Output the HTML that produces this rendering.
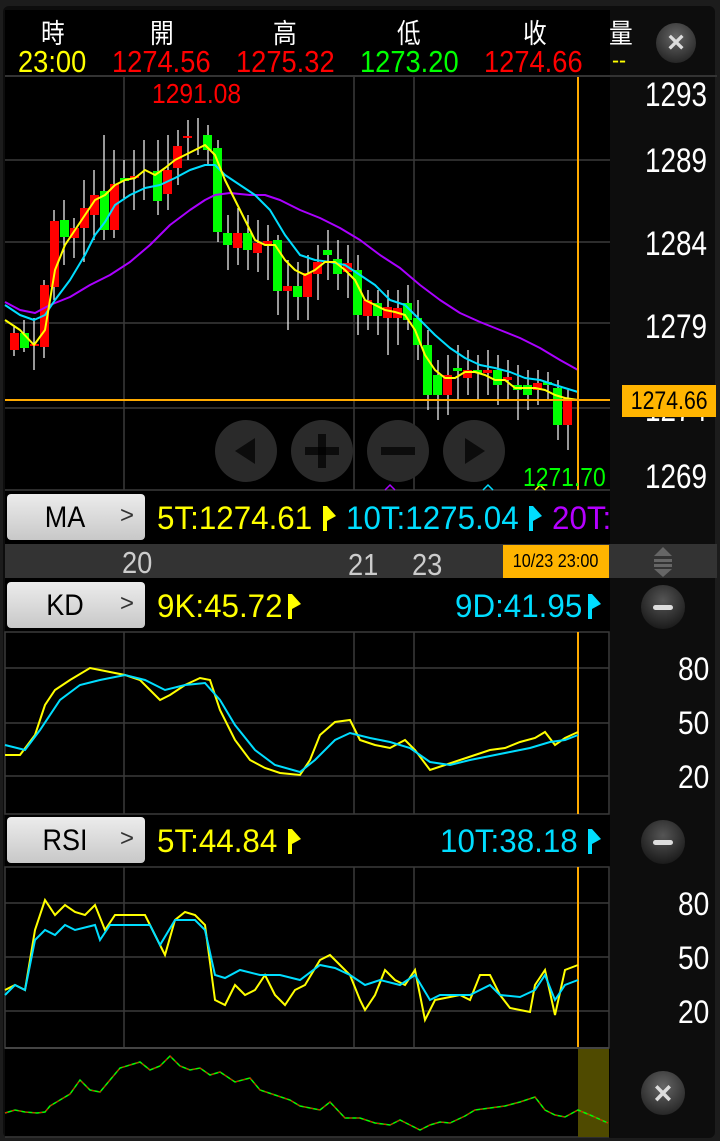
<!DOCTYPE html>
<html><head><meta charset="utf-8"><style>
*{margin:0;padding:0;box-sizing:border-box}
body{width:720px;height:1141px;background:#1c1c1c;overflow:hidden;font-family:"Liberation Sans","Noto Sans CJK TC",sans-serif;position:relative}
.abs{position:absolute}
.btn{position:absolute;left:7px;width:138px;height:46px;background:linear-gradient(#ececec,#c8c8c8);border-radius:4px;color:#000;font-size:30px;line-height:48px}
.btn span{position:absolute;left:0;width:116px;text-align:center;transform:scaleX(.9)}
.btn i{position:absolute;right:11px;font-style:normal;font-size:24px;color:#333;top:-2px}
.t{position:absolute;font-size:28px;white-space:nowrap;transform:scaleX(.88);transform-origin:left top}
.r{position:absolute;font-size:32px;white-space:nowrap;transform:scaleX(.98);transform-origin:left top}
.y{position:absolute;left:645px;font-size:34px;color:#fff;white-space:nowrap;transform:scaleX(.82);transform-origin:left top}
.circ{position:absolute;width:44px;height:44px;border-radius:50%;background:radial-gradient(circle at 50% 35%,#555,#1a1a1a 80%);}
.circ b{position:absolute;left:12px;top:20px;width:20px;height:5px;background:#ddd;border-radius:3px}
.zb{position:absolute;top:420px;width:62px;height:62px;border-radius:50%;background:#2a2a2a}
</style></head><body>
<div class="abs" style="left:3px;top:6px;width:712px;height:1132px;background:#0d0d0d;border-radius:6px"></div>
<div class="abs" style="left:5px;top:10px;width:605px;height:1127px;background:#000"></div>
<div class="t" style="left:41px;top:12px;color:#fff;font-size:27px">時</div>
<div class="t" style="left:150px;top:12px;color:#fff;font-size:27px">開</div>
<div class="t" style="left:273px;top:12px;color:#fff;font-size:27px">高</div>
<div class="t" style="left:397px;top:12px;color:#fff;font-size:27px">低</div>
<div class="t" style="left:523px;top:12px;color:#fff;font-size:27px">收</div>
<div class="t" style="left:609px;top:12px;color:#fff;font-size:27px">量</div>
<div class="t" style="left:18px;top:44px;color:#ffff00;font-size:31px">23:00</div>
<div class="t" style="left:112px;top:44px;color:#f00;font-size:31px">1274.56</div>
<div class="t" style="left:236px;top:44px;color:#f00;font-size:31px">1275.32</div>
<div class="t" style="left:360px;top:44px;color:#0f0;font-size:31px">1273.20</div>
<div class="t" style="left:484px;top:44px;color:#f00;font-size:31px">1274.66</div>
<div class="t" style="left:612px;top:47px;color:#ff0;font-size:24px">--</div>
<div class="abs" style="left:656px;top:23px;width:40px;height:40px;border-radius:50%;background:radial-gradient(circle at 50% 35%,#666,#222 85%);color:#ddd;font-size:30px;font-weight:bold;text-align:center;line-height:40px">×</div>
<div class="abs" style="left:5px;top:75px;width:712px;height:2px;background:#333"></div>

<svg class="abs" style="left:0;top:0" width="720" height="1141">
<g stroke="#3a3a3a" stroke-width="1.5" fill="none">
<line x1="124" y1="77" x2="124" y2="490"/><line x1="354" y1="77" x2="354" y2="490"/><line x1="414" y1="77" x2="414" y2="490"/>
<line x1="5" y1="160" x2="610" y2="160"/><line x1="5" y1="242" x2="610" y2="242"/><line x1="5" y1="323" x2="610" y2="323"/><line x1="5" y1="408" x2="610" y2="408"/>
<line x1="5" y1="490" x2="610" y2="490"/>
<rect x="5" y="632" width="604" height="182"/>
<line x1="124" y1="632" x2="124" y2="814"/><line x1="354" y1="632" x2="354" y2="814"/><line x1="414" y1="632" x2="414" y2="814"/>
<line x1="5" y1="668" x2="609" y2="668"/><line x1="5" y1="723" x2="609" y2="723"/><line x1="5" y1="776" x2="609" y2="776"/>
<rect x="5" y="867" width="604" height="181"/>
<line x1="124" y1="867" x2="124" y2="1048"/><line x1="354" y1="867" x2="354" y2="1048"/><line x1="414" y1="867" x2="414" y2="1048"/>
<line x1="5" y1="903" x2="609" y2="903"/><line x1="5" y1="957" x2="609" y2="957"/><line x1="5" y1="1011" x2="609" y2="1011"/>
<line x1="5" y1="1137" x2="609" y2="1137"/>
</g>
<g stroke="#fff" stroke-width="1.2">
<line x1="14" y1="325" x2="14" y2="356"/><line x1="24" y1="320" x2="24" y2="352"/><line x1="34" y1="318" x2="34" y2="370"/><line x1="44" y1="280" x2="44" y2="358"/><line x1="54" y1="210" x2="54" y2="300"/><line x1="64" y1="200" x2="64" y2="265"/><line x1="74" y1="218" x2="74" y2="258"/><line x1="84" y1="180" x2="84" y2="262"/><line x1="94" y1="170" x2="94" y2="240"/><line x1="104" y1="135" x2="104" y2="240"/><line x1="114" y1="150" x2="114" y2="238"/><line x1="124" y1="160" x2="124" y2="200"/><line x1="134" y1="150" x2="134" y2="210"/><line x1="144" y1="140" x2="144" y2="200"/><line x1="158" y1="140" x2="158" y2="215"/><line x1="168" y1="135" x2="168" y2="210"/><line x1="178" y1="130" x2="178" y2="185"/><line x1="188" y1="120" x2="188" y2="160"/><line x1="198" y1="118" x2="198" y2="155"/><line x1="208" y1="125" x2="208" y2="165"/><line x1="218" y1="140" x2="218" y2="242"/><line x1="228" y1="215" x2="228" y2="270"/><line x1="238" y1="208" x2="238" y2="265"/><line x1="248" y1="215" x2="248" y2="270"/><line x1="258" y1="220" x2="258" y2="272"/><line x1="268" y1="225" x2="268" y2="280"/><line x1="278" y1="235" x2="278" y2="315"/><line x1="288" y1="260" x2="288" y2="330"/><line x1="298" y1="262" x2="298" y2="320"/><line x1="308" y1="255" x2="308" y2="320"/><line x1="318" y1="245" x2="318" y2="300"/><line x1="328" y1="230" x2="328" y2="280"/><line x1="338" y1="240" x2="338" y2="290"/><line x1="348" y1="245" x2="348" y2="298"/><line x1="358" y1="255" x2="358" y2="335"/><line x1="368" y1="290" x2="368" y2="330"/><line x1="378" y1="290" x2="378" y2="335"/><line x1="388" y1="290" x2="388" y2="355"/><line x1="398" y1="290" x2="398" y2="345"/><line x1="408" y1="285" x2="408" y2="330"/><line x1="418" y1="300" x2="418" y2="360"/><line x1="428" y1="330" x2="428" y2="410"/><line x1="438" y1="360" x2="438" y2="420"/><line x1="448" y1="355" x2="448" y2="415"/><line x1="458" y1="345" x2="458" y2="400"/><line x1="468" y1="350" x2="468" y2="395"/><line x1="478" y1="355" x2="478" y2="400"/><line x1="488" y1="350" x2="488" y2="395"/><line x1="498" y1="355" x2="498" y2="405"/><line x1="508" y1="360" x2="508" y2="400"/><line x1="518" y1="365" x2="518" y2="420"/><line x1="528" y1="370" x2="528" y2="410"/><line x1="538" y1="370" x2="538" y2="405"/><line x1="548" y1="372" x2="548" y2="400"/><line x1="558" y1="380" x2="558" y2="440"/><line x1="568" y1="390" x2="568" y2="450"/>
</g>
<g>
<rect x="10" y="333" width="9" height="17" fill="#f00"/><rect x="20" y="333" width="9" height="15" fill="#0f0"/><rect x="30" y="344" width="9" height="2" fill="#f00"/><rect x="40" y="285" width="9" height="62" fill="#f00"/><rect x="50" y="221" width="9" height="66" fill="#f00"/><rect x="60" y="220" width="9" height="17" fill="#0f0"/><rect x="70" y="228" width="9" height="10" fill="#f00"/><rect x="80" y="208" width="9" height="20" fill="#f00"/><rect x="90" y="195" width="9" height="20" fill="#f00"/><rect x="100" y="191" width="9" height="39" fill="#0f0"/><rect x="110" y="184" width="9" height="46" fill="#f00"/><rect x="120" y="178" width="9" height="3" fill="#0f0"/><rect x="130" y="176" width="9" height="2" fill="#f00"/>
<rect x="153" y="171" width="9" height="30" fill="#0f0"/><rect x="163" y="170" width="9" height="24" fill="#f00"/><rect x="173" y="146" width="9" height="22" fill="#f00"/><rect x="183" y="136" width="9" height="2" fill="#f00"/><rect x="203" y="135" width="9" height="15" fill="#0f0"/><rect x="213" y="148" width="9" height="84" fill="#0f0"/><rect x="223" y="233" width="9" height="12" fill="#0f0"/><rect x="233" y="233" width="9" height="15" fill="#f00"/><rect x="243" y="233" width="9" height="17" fill="#0f0"/><rect x="253" y="243" width="9" height="10" fill="#f00"/><rect x="263" y="241" width="9" height="3" fill="#f00"/><rect x="273" y="240" width="9" height="51" fill="#0f0"/><rect x="283" y="286" width="9" height="5" fill="#f00"/><rect x="293" y="286" width="9" height="11" fill="#0f0"/><rect x="303" y="273" width="9" height="24" fill="#f00"/><rect x="313" y="262" width="9" height="12" fill="#f00"/><rect x="323" y="250" width="9" height="5" fill="#0f0"/><rect x="333" y="259" width="9" height="15" fill="#0f0"/><rect x="343" y="263" width="9" height="9" fill="#f00"/><rect x="353" y="270" width="9" height="45" fill="#0f0"/><rect x="363" y="300" width="9" height="16" fill="#f00"/><rect x="373" y="303" width="9" height="13" fill="#0f0"/><rect x="383" y="307" width="9" height="11" fill="#f00"/><rect x="393" y="308" width="9" height="10" fill="#f00"/><rect x="403" y="303" width="9" height="17" fill="#0f0"/><rect x="413" y="318" width="9" height="27" fill="#0f0"/><rect x="423" y="345" width="9" height="50" fill="#0f0"/><rect x="433" y="375" width="9" height="20" fill="#0f0"/><rect x="443" y="375" width="9" height="20" fill="#f00"/><rect x="453" y="368" width="9" height="3" fill="#0f0"/><rect x="463" y="370" width="9" height="8" fill="#f00"/><rect x="473" y="370" width="9" height="3" fill="#0f0"/><rect x="483" y="370" width="9" height="3" fill="#f00"/><rect x="493" y="370" width="9" height="15" fill="#0f0"/><rect x="503" y="377" width="9" height="3" fill="#f00"/><rect x="513" y="385" width="9" height="5" fill="#0f0"/><rect x="523" y="385" width="9" height="10" fill="#0f0"/><rect x="533" y="383" width="9" height="7" fill="#f00"/><rect x="543" y="382" width="9" height="3" fill="#0f0"/><rect x="553" y="388" width="9" height="37" fill="#0f0"/><rect x="563" y="398" width="9" height="27" fill="#f00"/>
</g>
<g fill="none" stroke-width="2" stroke-linejoin="round">
<polyline stroke="#aa00ff" points="5,302 20,310 35,313 50,305 70,297 90,285 110,275 130,262 150,245 170,225 190,210 205,200 215,195 230,193 250,195 265,195 280,200 300,210 320,218 340,228 360,240 380,255 400,268 420,285 440,300 460,313 480,322 500,330 520,338 540,348 560,360 578,370"/>
<polyline stroke="#00ddff" points="5,305 20,315 34,320 45,315 55,300 70,280 85,255 95,235 105,222 115,205 130,195 145,188 160,185 175,178 190,170 205,165 215,165 225,175 240,185 255,195 270,210 285,235 300,255 315,260 330,262 345,265 360,275 375,285 390,300 405,305 420,320 435,335 450,348 465,358 480,365 495,368 510,372 525,378 540,380 555,385 578,392"/>
<polyline stroke="#ffff00" points="5,320 20,330 34,345 45,330 55,270 65,245 75,230 85,215 95,200 105,195 115,185 125,180 135,178 145,170 155,175 165,168 175,160 185,155 195,150 205,145 215,155 225,180 235,200 245,220 255,240 265,245 275,245 285,260 295,270 305,275 315,270 325,262 335,262 345,270 355,280 365,300 375,305 385,310 395,312 405,315 415,330 425,355 435,370 445,378 455,378 465,372 475,372 485,375 495,380 505,380 515,388 525,388 535,388 545,390 555,395 565,398 578,400"/>
</g>
<path d="M385 490 l5 -5 l5 5" stroke="#aa00ff" fill="none" stroke-width="1.5"/>
<path d="M483 490 l5 -5 l5 5" stroke="#00ddff" fill="none" stroke-width="1.5"/>
<path d="M535 490 l5 -5 l5 5" stroke="#ffff00" fill="none" stroke-width="1.5"/>
<line x1="5" y1="400" x2="610" y2="400" stroke="#ffaa00" stroke-width="2"/>
<line x1="578" y1="77" x2="578" y2="490" stroke="#ffaa00" stroke-width="2"/>
<line x1="578" y1="632" x2="578" y2="814" stroke="#ffaa00" stroke-width="2"/>
<line x1="578" y1="867" x2="578" y2="1048" stroke="#ffaa00" stroke-width="2"/>
<g fill="none" stroke-width="2">
<polyline stroke="#ffff00" points="5,755 20,755 35,735 45,705 55,690 70,680 90,668 110,672 125,675 140,680 150,690 160,700 170,695 185,685 200,678 210,680 220,710 235,740 250,760 265,768 280,773 300,775 310,760 320,735 335,722 350,720 360,740 375,745 390,748 405,740 415,750 430,770 445,765 460,760 475,755 490,750 505,748 520,742 535,738 545,732 555,745 565,738 578,732"/>
<polyline stroke="#00ddff" points="5,745 25,750 40,730 60,700 80,685 100,680 125,675 145,680 165,690 185,685 205,683 220,700 235,725 255,750 275,765 300,772 315,760 335,740 350,733 370,738 390,742 410,748 430,762 450,765 470,760 490,756 510,752 530,748 550,742 565,740 578,735"/>
<polyline stroke="#ffff00" points="5,990 15,985 25,990 35,930 45,900 55,915 65,905 75,912 85,915 95,905 105,930 115,915 125,915 135,915 145,915 155,935 165,955 175,920 185,912 195,915 205,925 215,1000 225,1005 235,985 245,995 255,990 265,975 275,995 285,1005 295,990 305,985 320,960 330,955 340,965 350,975 360,1000 365,1010 375,995 385,970 395,980 405,985 415,970 425,1020 435,1000 445,998 460,995 470,1000 480,975 490,975 500,995 510,1008 520,1010 530,1012 535,985 545,970 555,1015 565,970 578,965"/>
<polyline stroke="#00ddff" points="5,995 15,985 25,990 35,940 45,930 55,935 65,925 75,930 95,925 100,940 110,925 150,925 160,945 175,920 195,920 205,930 215,975 225,978 240,970 260,975 280,975 300,980 320,965 335,968 350,975 365,985 380,980 400,985 415,975 430,1000 440,995 455,995 470,995 490,985 500,995 520,997 535,990 545,975 555,1000 565,985 578,980"/>
</g>
<rect x="578" y="1049" width="31" height="88" fill="#4f4a00"/>
<line x1="5" y1="1048" x2="609" y2="1048" stroke="#444" stroke-width="2"/>
<polyline fill="none" stroke="#0f0" stroke-width="1.5" points="5,1113 15,1110 25,1112 37,1113 45,1112 50,1106 60,1100 70,1094 80,1080 90,1090 100,1092 110,1080 120,1068 130,1065 140,1062 150,1070 160,1066 170,1056 180,1066 190,1070 200,1068 210,1075 220,1072 235,1082 250,1078 260,1090 275,1095 290,1100 300,1106 320,1110 330,1102 345,1118 360,1118 375,1123 390,1125 400,1120 410,1125 420,1130 430,1125 440,1122 450,1123 465,1116 475,1110 490,1108 505,1106 520,1102 535,1097 545,1110 555,1115 565,1117 578,1110 590,1115 608,1123"/>
<polyline fill="none" stroke="#f00" stroke-width="1" stroke-dasharray="3 4" points="5,1113 15,1110 25,1112 37,1113 45,1112 50,1106 60,1100 70,1094 80,1080 90,1090 100,1092 110,1080 120,1068 130,1065 140,1062 150,1070 160,1066 170,1056 180,1066 190,1070 200,1068 210,1075 220,1072 235,1082 250,1078 260,1090 275,1095 290,1100 300,1106 320,1110 330,1102 345,1118 360,1118 375,1123 390,1125 400,1120 410,1125 420,1130 430,1125 440,1122 450,1123 465,1116 475,1110 490,1108 505,1106 520,1102 535,1097 545,1110 555,1115 565,1117 578,1110 590,1115 608,1123"/>
<g>
<path d="M323 506 h4 l9 10 l-9 5 v10 h-4 z" fill="#ff0"/>
<path d="M529 506 h4 l9 10 l-9 5 v10 h-4 z" fill="#00ddff"/>
<path d="M288 594 h4 l9 10 l-9 5 v10 h-4 z" fill="#ff0"/>
<path d="M588 594 h4 l9 10 l-9 5 v10 h-4 z" fill="#00ddff"/>
<path d="M288 829 h4 l9 10 l-9 5 v10 h-4 z" fill="#ff0"/>
<path d="M588 829 h4 l9 10 l-9 5 v10 h-4 z" fill="#00ddff"/>
</g>
</svg>
<div class="t" style="left:152px;top:78px;color:#f00;font-size:28px">1291.08</div>
<div class="t" style="left:523px;top:462px;color:#0f0;font-size:26px">1271.70</div>
<div class="zb" style="left:215px"><svg width="62" height="62"><polygon points="20,31 40,18 40,44" fill="#000" opacity=".7"/></svg></div>
<div class="zb" style="left:291px"><svg width="62" height="62"><rect x="14" y="27" width="34" height="8" fill="#000" opacity=".7"/><rect x="27" y="14" width="8" height="34" fill="#000" opacity=".7"/></svg></div>
<div class="zb" style="left:367px"><svg width="62" height="62"><rect x="14" y="27" width="34" height="8" fill="#000" opacity=".7"/></svg></div>
<div class="zb" style="left:443px"><svg width="62" height="62"><polygon points="42,31 22,18 22,44" fill="#000" opacity=".7"/></svg></div>
<div class="y" style="top:76px">1293</div>
<div class="y" style="top:142px">1289</div>
<div class="y" style="top:225px">1284</div>
<div class="y" style="top:308px">1279</div>
<div class="y" style="top:391px">1274</div>
<div class="y" style="top:458px">1269</div>
<div class="abs" style="left:622px;top:385px;width:94px;height:32px;background:#ffb400;color:#000;font-size:25px;line-height:32px;text-align:center"><span style="display:inline-block;transform:scaleX(.85)">1274.66</span></div>
<div class="btn" style="top:494px"><span>MA</span><i>&gt;</i></div>
<div class="r" style="left:157px;top:500px;color:#ff0">5T:1274.61</div>
<div class="r" style="left:346px;top:500px;color:#00ddff">10T:1275.04</div>
<div class="abs" style="left:552px;top:492px;width:58px;height:50px;overflow:hidden"><div class="r" style="left:0;top:8px;color:#b400ff">20T:</div></div>
<div class="abs" style="left:5px;top:544px;width:712px;height:34px;background:#333"></div>
<div class="t" style="left:122px;top:545px;color:#ccc;font-size:31px">20</div>
<div class="t" style="left:348px;top:547px;color:#ccc;font-size:31px">21</div>
<div class="t" style="left:412px;top:547px;color:#ccc;font-size:31px">23</div>
<div class="abs" style="left:503px;top:545px;width:106px;height:33px;background:#ffb400;color:#000;font-size:18px;line-height:33px;text-align:center"><span style="display:inline-block;transform:scaleX(.9)">10/23 23:00</span></div>
<svg class="abs" style="left:650px;top:545px" width="26" height="34"><polygon points="13,2 22,11 4,11" fill="#666"/><rect x="4" y="14" width="18" height="3" fill="#666"/><rect x="4" y="19" width="18" height="3" fill="#666"/><polygon points="13,32 22,24 4,24" fill="#666"/></svg>
<div class="btn" style="top:582px"><span>KD</span><i>&gt;</i></div>
<div class="r" style="left:157px;top:588px;color:#ff0">9K:45.72</div>
<div class="r" style="left:455px;top:588px;color:#00ddff">9D:41.95</div>
<div class="circ" style="left:641px;top:585px"><b></b></div>
<div class="t" style="left:678px;top:651px;color:#fff;font-size:32px">80</div>
<div class="t" style="left:678px;top:705px;color:#fff;font-size:32px">50</div>
<div class="t" style="left:678px;top:759px;color:#fff;font-size:32px">20</div>
<div class="btn" style="top:817px"><span>RSI</span><i>&gt;</i></div>
<div class="r" style="left:157px;top:823px;color:#ff0">5T:44.84</div>
<div class="r" style="left:440px;top:823px;color:#00ddff">10T:38.18</div>
<div class="circ" style="left:641px;top:820px"><b></b></div>
<div class="t" style="left:678px;top:886px;color:#fff;font-size:32px">80</div>
<div class="t" style="left:678px;top:940px;color:#fff;font-size:32px">50</div>
<div class="t" style="left:678px;top:994px;color:#fff;font-size:32px">20</div>
<div class="abs" style="left:641px;top:1071px;width:44px;height:44px;border-radius:50%;background:radial-gradient(circle at 50% 35%,#666,#222 85%);color:#ddd;font-size:32px;font-weight:bold;text-align:center;line-height:44px">×</div>
</body></html>
